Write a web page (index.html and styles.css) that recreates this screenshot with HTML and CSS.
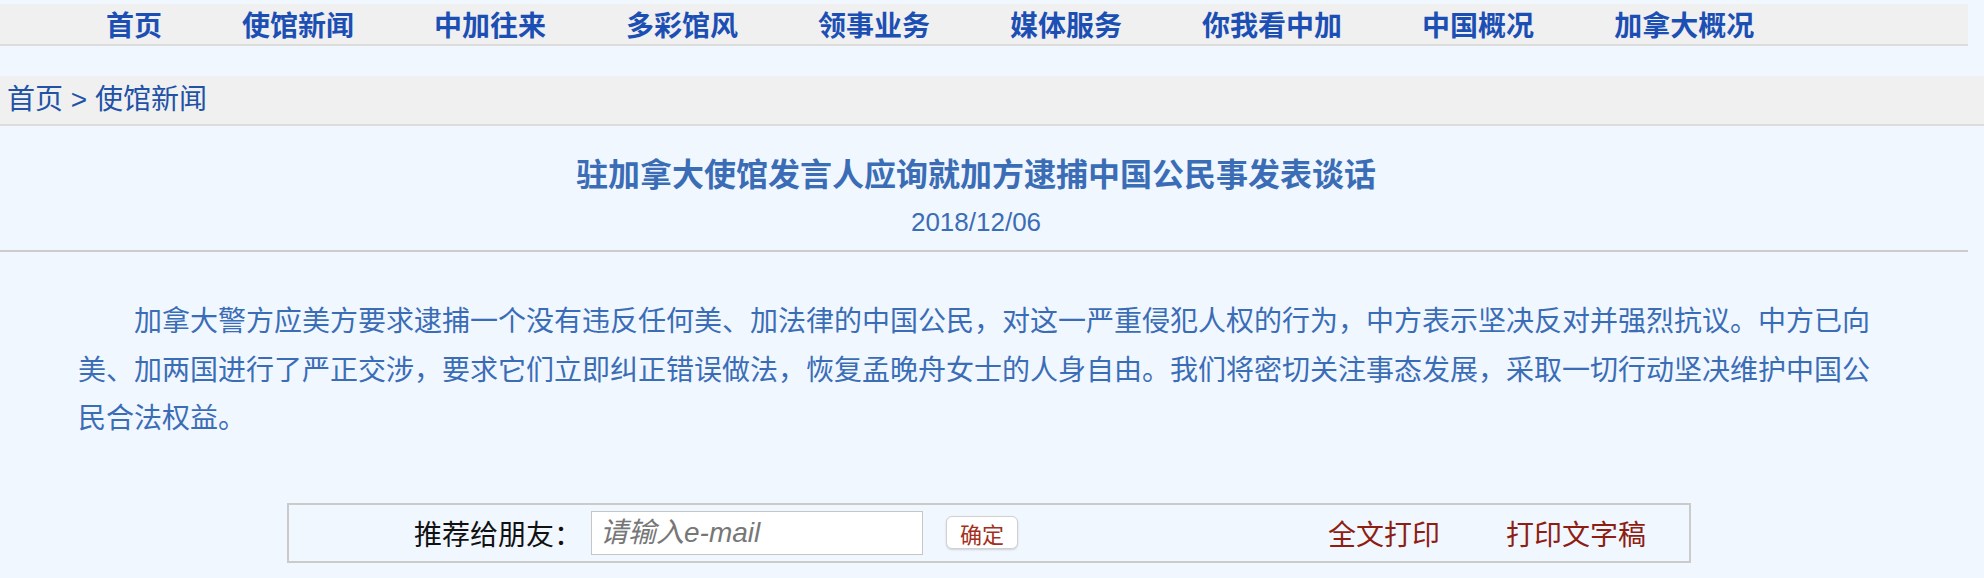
FILE: index.html
```html
<!DOCTYPE html>
<html lang="zh-CN">
  <head>
    <meta charset="UTF-8" />
    <meta name="viewport" content="width=device-width, initial-scale=1.0" />
    <title>驻加拿大使馆发言人应询就加方逮捕中国公民事发表谈话</title>
    <link rel="stylesheet" href="styles.css">
  </head>
  <body>
    <div class="nav_bar">
      <a href="#" class="nav_link">首页</a>
      <a href="#" class="nav_link">使馆新闻</a>
      <a href="#" class="nav_link">中加往来</a>
      <a href="#" class="nav_link">多彩馆风</a>
      <a href="#" class="nav_link">领事业务</a>
      <a href="#" class="nav_link">媒体服务</a>
      <a href="#" class="nav_link">你我看中加</a>
      <a href="#" class="nav_link">中国概况</a>
      <a href="#" class="nav_link">加拿大概况</a>
    </div>

    <div class="crumbs">
      <a href="#" class="crumb_link">首页</a> &gt; <a href="#" class="crumb_link">使馆新闻</a>
    </div>

    <div class="article">
      <div class="article_head">
        <h1 class="article_title">驻加拿大使馆发言人应询就加方逮捕中国公民事发表谈话</h1>
        <p class="article_date">2018/12/06</p>
      </div>
      <div class="article_body">
        <p>加拿大警方应美方要求逮捕一个没有违反任何美、加法律的中国公民，对这一严重侵犯人权的行为，中方表示坚决反对并强烈抗议。中方已向美、加两国进行了严正交涉，要求它们立即纠正错误做法，恢复孟晚舟女士的人身自由。我们将密切关注事态发展，采取一切行动坚决维护中国公民合法权益。</p>
      </div>
    </div>

    <div class="share_box">
      <span class="share_label">推荐给朋友：</span>
      <input type="text" class="share_input" placeholder="请输入e-mail" />
      <button class="share_button">确定</button>
      <div class="print_links">
        <a href="#" class="print_link">全文打印</a>
        <a href="#" class="print_link">打印文字稿</a>
      </div>
    </div>
  </body>
</html>
```

FILE: styles.css
```css
body {
  margin: 0;

  --page: #f0f7ff;
  --bar: #f0f0f0;
  --nav_blue: #1c4fb4;
  --text_blue: #3b6db6;
  --dark_red: #8e1d12;

  font-family: "Liberation Sans", "Noto Sans CJK SC", sans-serif;
  background-color: var(--page);
}

.nav_bar {
  width: 1968px;
  height: 42px;
  margin-top: 4px;
  padding: 5px 0 0 66px;
  box-sizing: border-box;
  display: flex;
  background-color: var(--bar);
  border-bottom: 2px solid #dcdcdc;
}

.nav_link {
  padding: 0 40px;
  font-size: 28px;
  font-weight: bold;
  line-height: 35px;
  color: var(--nav_blue);
  text-decoration: none;
}

.crumbs {
  height: 50px;
  margin-top: 30px;
  padding-left: 7px;
  box-sizing: border-box;
  background-color: var(--bar);
  border-bottom: 2px solid #dcdcdc;
  font-size: 28px;
  line-height: 48px;
  color: #2152a6;
}

.crumb_link {
  color: inherit;
  text-decoration: none;
}

.article {
  width: 1968px;
}

.article_head {
  padding: 29px 16px 12px 0;
  border-bottom: 2px solid #cccccc;
  text-align: center;
  color: var(--text_blue);
}

.article_title {
  margin: 0;
  font-size: 32px;
  line-height: 40px;
  font-weight: bold;
}

.article_date {
  margin: 11px 0 0;
  font-size: 26px;
  line-height: 32px;
}

.article_body {
  padding: 46px 78px 0;
}

.article_body p {
  margin: 0;
  font-size: 28px;
  line-height: 48.5px;
  text-indent: 2em;
  color: var(--text_blue);
}

.share_box {
  width: 1404px;
  height: 60px;
  margin: 59px 0 0 287px;
  padding: 0 43px 0 125px;
  box-sizing: border-box;
  display: flex;
  align-items: center;
  border: 2px solid #cbcbcb;
}

.share_label {
  font-size: 28px;
  color: #111111;
}

.share_input {
  width: 332px;
  height: 44px;
  margin-left: 9px;
  padding: 0 8px;
  box-sizing: border-box;
  border: 1px solid #c6c6c6;
  background-color: #ffffff;
  font-family: inherit;
  font-size: 28px;
}

.share_input::placeholder {
  color: #777777;
  font-style: italic;
}

.share_button {
  width: 72px;
  height: 33px;
  margin-left: 23px;
  padding: 0;
  border: 1px solid #d0d0d0;
  border-radius: 6px;
  background-color: #ffffff;
  box-shadow: 0 1px 2px rgba(0, 0, 0, 0.15);
  font-family: inherit;
  font-size: 22px;
  color: #a3301d;
  cursor: pointer;
}

.print_links {
  margin-left: auto;
  display: flex;
  gap: 66px;
}

.print_link {
  font-size: 28px;
  color: var(--dark_red);
  text-decoration: none;
}
```
